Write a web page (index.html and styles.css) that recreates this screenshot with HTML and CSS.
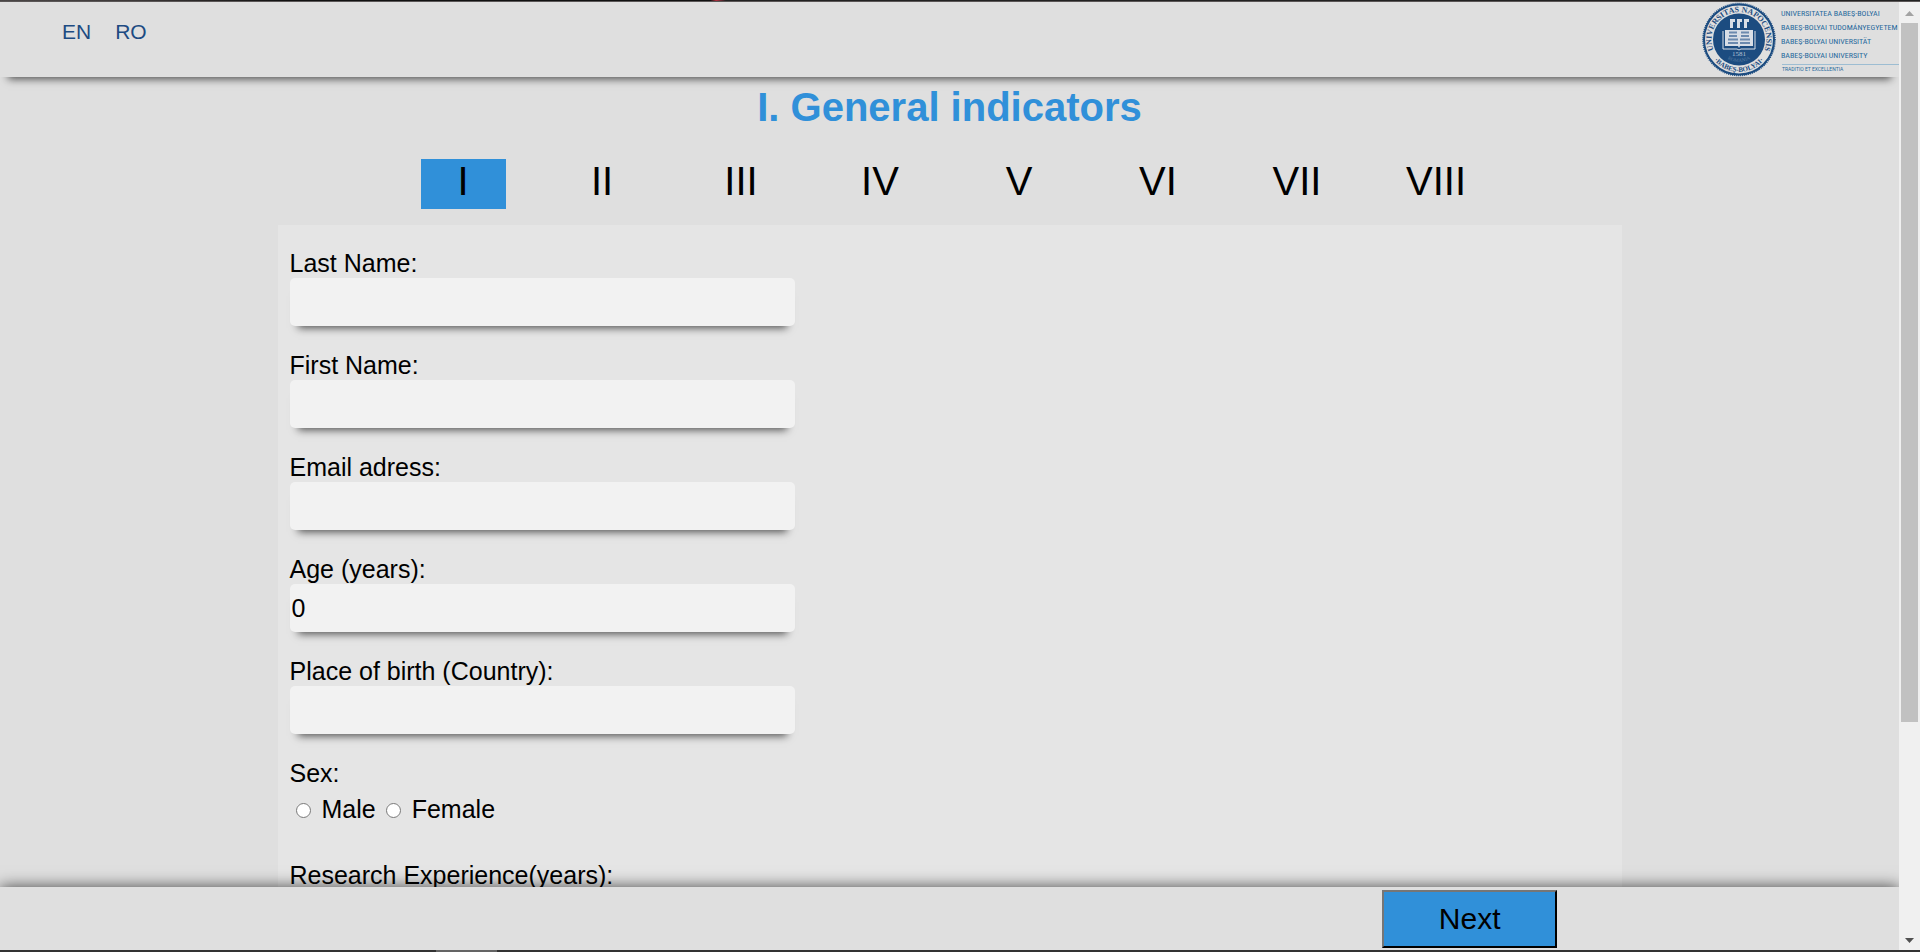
FILE: index.html
```html
<!DOCTYPE html>
<html lang="en">
<head>
<meta charset="utf-8">
<title>General indicators</title>
<link rel="stylesheet" href="styles.css">
</head>
<body>
<div class="window">
  <div class="edge edge-top"></div>
  <div class="viewport">
    <div class="page">
      <header class="topbar">
        <nav class="languages" aria-label="Language">
          <a href="#en">EN</a>
          <a href="#ro">RO</a>
        </nav>
        <svg class="logo" viewBox="0 0 198 75" width="198" height="75" role="img" aria-label="Babeş-Bolyai University">
          <defs>
            <path id="arc-top" d="M16.900 55.200 A27.500 27.500 0 1 1 59.100 55.200"/>
            <path id="arc-bottom" d="M7.500 48.600 A32.500 32.500 0 0 0 68.500 48.600"/>
            <path id="arc-country" d="M19.300 50 A22.500 22.500 0 0 0 56.700 50"/>
          </defs>
          <circle cx="38" cy="37.500" r="35" class="rim"/>
          <circle cx="38" cy="37.500" r="35.800" class="teeth"/>
          <circle cx="38" cy="37.500" r="26" class="disc"/>
          <text class="ring"><textPath href="#arc-top" startOffset="50%">UNIVERSITAS NAPOCENSIS</textPath></text>
          <text class="ring ring-low"><textPath href="#arc-bottom" startOffset="50%">·BABEŞ-BOLYAI·</textPath></text>
          <g class="paper">
            <path d="M29 17h5v3h-2v6h-3zM36 17h5v3h-2v6h-3zM43 17h5v3h-2v6h-3z"/>
            <path d="M24 28h28v16h-13l-1 2-1-2h-13z"/>
            <path d="M22 29v18h14l2 1 2-1h14v-18" class="cover"/>
          </g>
          <path class="script" d="M28 30.500h8M40 30.500h8M28 34h8M40 34h8M27 37.500h10M39 37.500h10M27 41h10M39 41h10"/>
          <text class="year" x="38" y="54">1581</text>
          <text class="country"><textPath href="#arc-country" startOffset="50%">ROMANIA</textPath></text>
          <g class="names">
            <text x="80" y="14">UNIVERSITATEA BABEŞ-BOLYAI</text>
            <text x="80" y="28">BABEŞ-BOLYAI TUDOMÁNYEGYETEM</text>
            <text x="80" y="42">BABEŞ-BOLYAI UNIVERSITÄT</text>
            <text x="80" y="56">BABEŞ-BOLYAI UNIVERSITY</text>
          </g>
          <path class="rule" d="M81 62.500h117"/>
          <text class="motto" x="81" y="69">TRADITIO ET EXCELLENTIA</text>
        </svg>
      </header>

      <main class="content">
        <h1 class="title">I. General indicators</h1>
        <nav class="steps" aria-label="Sections">
          <a href="#s1" class="step current" aria-current="step">I</a>
          <a href="#s2" class="step">II</a>
          <a href="#s3" class="step">III</a>
          <a href="#s4" class="step">IV</a>
          <a href="#s5" class="step">V</a>
          <a href="#s6" class="step">VI</a>
          <a href="#s7" class="step">VII</a>
          <a href="#s8" class="step">VIII</a>
        </nav>
        <form class="panel" id="indicators">
          <div class="field">
            <label for="last">Last Name:</label>
            <input class="box" id="last" type="text">
          </div>
          <div class="field">
            <label for="first">First Name:</label>
            <input class="box" id="first" type="text">
          </div>
          <div class="field">
            <label for="email">Email adress:</label>
            <input class="box" id="email" type="email">
          </div>
          <div class="field">
            <label for="age">Age (years):</label>
            <input class="box" id="age" type="number" value="0">
          </div>
          <div class="field">
            <label for="country">Place of birth (Country):</label>
            <input class="box" id="country" type="text">
          </div>
          <fieldset class="field choices">
            <legend>Sex:</legend>
            <div class="options">
              <input class="radio" type="radio" name="sex" id="male">
              <label for="male">Male</label>
              <input class="radio" type="radio" name="sex" id="female">
              <label for="female">Female</label>
            </div>
          </fieldset>
          <div class="field">
            <label for="research">Research Experience(years):</label>
            <input class="box" id="research" type="number" value="0">
          </div>
        </form>
      </main>

      <footer class="bottombar">
        <button class="next" type="submit" form="indicators">Next</button>
      </footer>
    </div>
    <div class="scrollbar" aria-hidden="true">
      <svg class="arrow arrow-up" viewBox="0 0 9 5" width="9" height="5"><path d="M0 5L4.500 0L9 5z"/></svg>
      <div class="track"><div class="thumb"></div></div>
      <svg class="arrow arrow-down" viewBox="0 0 9 5" width="9" height="5"><path d="M0 0L4.500 5L9 0z"/></svg>
    </div>
  </div>
  <div class="edge edge-bottom"></div>
</div>
</body>
</html>
```
FILE: styles.css
```css
* {
  box-sizing: border-box;
}

body {
  margin: 0;
  background: #dfdfdf;
  color: #000;
  font-family: "Liberation Sans", Arial, sans-serif;
  font-size: 25px;
  line-height: 28px;
}

.window {
  display: flex;
  flex-direction: column;
  height: 100vh;
}

.edge {
  flex: none;
  height: 2px;
}

.edge-top {
  border-bottom: 1px solid #5a5656;
  background: linear-gradient(90deg, #4a4646 0%, #3c3838 7%, #111 15%, #111 37%, #b03040 37.3%, #222 37.8%, #222 100%);
}

.edge-bottom {
  background: linear-gradient(90deg, #323232 436px, #646464 436px, #646464 497px, #323232 497px);
}

.viewport {
  display: flex;
  flex: 1;
  min-height: 0;
}

.page {
  display: flex;
  flex: 1;
  flex-direction: column;
  min-width: 0;
  overflow: hidden;
}

/* Header */
.topbar {
  z-index: 1;
  display: flex;
  flex: none;
  justify-content: space-between;
  background: #dfdfdf;
  box-shadow: 0 10px 8px -8px rgba(0, 0, 0, 0.65);
}

.languages {
  display: flex;
  gap: 24px;
  padding: 18px 0 0 62px;
  font-size: 21px;
  line-height: 24px;
}

.languages a {
  color: #1d4b82;
  text-decoration: none;
}

.logo {
  display: block;
}

.rim {
  fill: #dfdfdf;
  stroke: #1c4c80;
  stroke-width: 2;
}

.teeth {
  fill: none;
  stroke: #1c4c80;
  stroke-width: 2;
  stroke-dasharray: 1 1;
}

.disc {
  fill: #1c4c80;
}

.ring {
  fill: #1c4c80;
  font-family: "Liberation Serif", serif;
  font-size: 8px;
  font-weight: bold;
  text-anchor: middle;
}

.ring-low {
  font-size: 7px;
}

.paper {
  fill: #d8dee6;
}

.cover {
  fill: none;
  stroke: #d8dee6;
}

.script {
  stroke: #6c8aae;
  stroke-width: 2;
}

.year {
  fill: #b4c3d4;
  font-family: "Liberation Serif", serif;
  font-size: 7px;
  text-anchor: middle;
}

.country {
  fill: #55799f;
  font-family: "Liberation Serif", serif;
  font-size: 5px;
  text-anchor: middle;
}

.names {
  fill: #286a9d;
  font-family: "Liberation Sans Narrow", "Roboto Condensed", "Open Sans Condensed", Roboto, sans-serif;
  font-size: 8px;
}

.rule {
  stroke: #9dbdd2;
}

.motto {
  fill: #286a9d;
  font-family: Roboto, sans-serif;
  font-size: 5px;
}

/* Page content */
.content {
  flex: 1;
  min-height: 0;
  overflow-y: auto;
  scrollbar-width: none;
}

.title {
  margin: 7px 0 29px;
  color: #3090d9;
  font-size: 40px;
  line-height: 46px;
  text-align: center;
}

.steps {
  display: flex;
  justify-content: center;
  gap: 54px;
  margin-bottom: 16px;
}

.step {
  width: 85px;
  height: 50px;
  color: #000;
  font-size: 40px;
  line-height: 44px;
  text-align: center;
  text-decoration: none;
}

.current {
  background: #3090d9;
}

.panel {
  display: flex;
  flex-direction: column;
  gap: 26px;
  width: 70vw;
  margin: 0 auto;
  padding: 25px 12px;
  background: #e5e5e5;
}

.field {
  display: flex;
  flex-direction: column;
  gap: 2px;
  line-height: 26px;
}

.box {
  width: 505px;
  max-width: 100%;
  height: 48px;
  padding: 0 2px;
  border: 0;
  border-radius: 5px;
  background: #f2f2f2;
  box-shadow: 0 10px 8px -8px rgba(0, 0, 0, 0.65);
  color: #000;
  font: inherit;
  appearance: textfield;
}

.choices {
  display: block;
  min-width: 0;
  margin: 0;
  padding: 0 0 14px;
  border: 0;
}

.choices legend {
  padding: 0;
}

.options {
  display: flex;
  align-items: center;
  padding: 10px 6px 0;
}

.radio {
  width: 15px;
  height: 15px;
  margin: 2px 11px 0 0;
}

.options label + .radio {
  margin-left: 10px;
}

/* Footer */
.bottombar {
  z-index: 1;
  display: flex;
  flex: none;
  justify-content: flex-end;
  padding: 3px 18% 2px 0;
  background: #dfdfdf;
  box-shadow: 0 0 15px rgba(0, 0, 0, 0.7);
}

.next {
  width: 175px;
  height: 58px;
  padding: 0;
  border: 2px outset #767676;
  border-color: #767676 #212121 #212121 #767676;
  background: #3090d9;
  color: #000;
  font: inherit;
  font-size: 30px;
}

/* Scrollbar */
.scrollbar {
  display: flex;
  flex: none;
  flex-direction: column;
  align-items: center;
  width: 21px;
  padding: 9px 0 7px;
  background: #f0f0f0;
}

.arrow {
  flex: none;
}

.arrow-up {
  fill: #a3a3a3;
}

.arrow-down {
  fill: #505050;
}

.track {
  flex: 1;
  width: 17px;
  margin: 7px 0;
}

.thumb {
  height: 77%;
  background: #c1c1c1;
}
```
